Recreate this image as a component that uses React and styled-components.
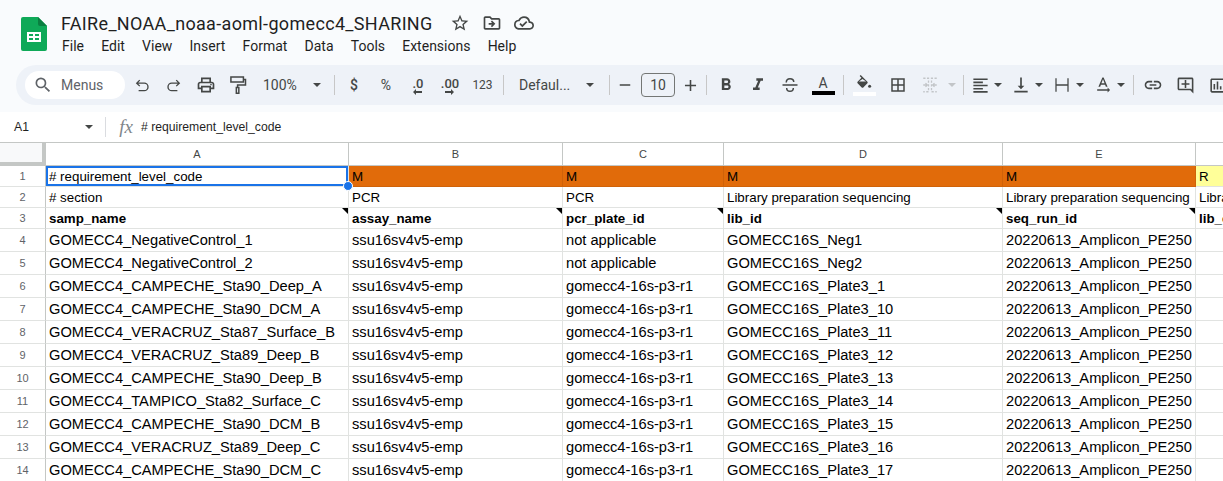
import React from 'react';
import styled, { createGlobalStyle } from 'styled-components';
import {
  MdStarBorder, MdOutlineDriveFileMove, MdOutlineCloudDone, MdSearch, MdOutlinePrint,
  MdRemove, MdAdd, MdFormatBold, MdFormatItalic, MdBorderAll, MdFormatAlignLeft,
  MdVerticalAlignBottom, MdTextRotationNone, MdLink, MdOutlineAddComment, MdOutlineInsertChart,
} from 'react-icons/md';

const GlobalStyle = createGlobalStyle`
  html, body { margin: 0; padding: 0; background: #f9fbfd; }
  body { font-family: Roboto, "Liberation Sans", sans-serif; }
`;

const Page = styled.div`
  width: 1223px;
  height: 481px;
  overflow: hidden;
  background: #f9fbfd;
  display: flex;
  flex-direction: column;
`;

const Header = styled.header`
  height: 65px;
  display: flex;
  padding-left: 21px;
  box-sizing: border-box;
  flex: none;
`;

const LogoWrap = styled.div`
  width: 26px;
  padding-top: 17px;
  margin-right: 14px;
`;

const HeaderMain = styled.div`
  display: flex;
  flex-direction: column;
`;

const TitleRow = styled.div`
  display: flex;
  align-items: center;
  height: 24px;
  margin-top: 11px;
  color: #444746;
`;

const Title = styled.div`
  font-size: 18px;
  letter-spacing: 0.33px;
  color: #1f1f1f;
  width: 383px;
  white-space: nowrap;
`;

const TitleIcon = styled.span`
  width: 32px;
  display: flex;
  justify-content: center;
`;

const MenuBar = styled.nav`
  display: flex;
  gap: 17.2px;
  padding-left: 1px;
  height: 22px;
  align-items: center;
  font-size: 14px;
  color: #1f1f1f;
`;

const Toolbar = styled.div`
  flex: none;
  height: 40px;
  margin-left: 16px;
  padding-left: 9px;
  display: flex;
  align-items: center;
  background: #eef2f8;
  border-radius: 20px 0 0 20px;
  color: #444746;
  overflow: hidden;
`;

const SearchPill = styled.div`
  flex: none;
  width: 100px;
  height: 28px;
  margin-right: 1px;
  box-sizing: border-box;
  padding-left: 8px;
  display: flex;
  align-items: center;
  gap: 8px;
  background: #fff;
  border-radius: 14px;
  font-size: 14px;
  color: #5f6368;
`;

const ToolButton = styled.div`
  flex: none;
  width: ${(p) => p.$w || 32}px;
  height: 28px;
  display: flex;
  align-items: center;
  justify-content: center;
  color: ${(p) => (p.$muted ? '#c2c5c8' : 'inherit')};
  font-size: ${(p) => p.$fs || 14}px;
  font-weight: ${(p) => (p.$bold ? 500 : 400)};
`;

const LabelButton = styled.div`
  flex: none;
  width: ${(p) => p.$w}px;
  padding-left: ${(p) => p.$pl}px;
  box-sizing: border-box;
  height: 28px;
  display: flex;
  align-items: center;
  justify-content: space-between;
  padding-right: ${(p) => p.$pr}px;
  font-size: 14px;
`;

const Caret = styled.span`
  width: 0;
  height: 0;
  border-left: 4px solid transparent;
  border-right: 4px solid transparent;
  border-top: 4px solid ${(p) => p.$color || '#444746'};
`;

const Sep = styled.span`
  flex: none;
  width: 1px;
  height: 20px;
  background: #c7c7c7;
  margin: 0 ${(p) => p.$r ?? 3}px 0 ${(p) => p.$l ?? 4}px;
`;

const SizeBox = styled.div`
  flex: none;
  width: 34px;
  height: 24px;
  margin: 0 3px;
  box-sizing: border-box;
  border: 1px solid #747775;
  border-radius: 4px;
  display: flex;
  align-items: center;
  justify-content: center;
  font-size: 14px;
`;

const Decimal = styled.span`
  display: flex;
  flex-direction: column;
  align-items: center;
  font-size: 13px;
  font-weight: 500;
  line-height: 11px;
  margin-top: 2px;
`;

const ColorIcon = styled.span`
  display: flex;
  flex-direction: column;
  align-items: center;
  width: 23px;
  font-size: 14px;
  line-height: 15px;
  margin-top: 1px;
`;

const Swatch = styled.span`
  width: 23px;
  height: 4px;
  background: ${(p) => p.$color};
`;

const FormulaBar = styled.div`
  flex: none;
  height: 30px;
  margin-top: 7px;
  background: #fff;
  display: flex;
  align-items: center;
  font-family: "Liberation Sans", Arial, sans-serif;
  font-size: 12.2px;
  color: #1f1f1f;
`;

const NameBox = styled.div`
  width: 106px;
  box-sizing: border-box;
  padding: 0 12px 0 14px;
  display: flex;
  justify-content: space-between;
  align-items: center;
  border-right: 1px solid #dadce0;
  height: 20px;
`;

const FxLabel = styled.span`
  width: 35px;
  text-align: right;
  padding-right: 8px;
  box-sizing: border-box;
  font-family: "Liberation Serif", serif;
  font-style: italic;
  font-size: 19px;
  color: #80868b;
`;

const Sheet = styled.div`
  position: relative;
  flex: none;
  display: grid;
  grid-template-columns: 46px 303px 214px 161px 279px 193px 193px;
  grid-template-rows: 23px 21px 21px 21px repeat(11, 23px);
  height: 339px;
  overflow: hidden;
  background: #fff;
  border-top: 1px solid #c4c7c5;
  font-family: "Liberation Sans", Arial, sans-serif;
`;

const Corner = styled.div`
  background: #f8f9fa;
  border-right: 4px solid #c4c7c5;
  border-bottom: 4px solid #c4c7c5;
`;

const ColHead = styled.div`
  display: flex;
  align-items: center;
  justify-content: center;
  background: #fff;
  border-right: 1px solid #c4c7c5;
  border-bottom: 1px solid #c4c7c5;
  font-size: 11px;
  color: #444746;
`;

const RowHead = styled.div`
  display: flex;
  align-items: center;
  justify-content: center;
  border-right: 1px solid #c4c7c5;
  border-bottom: 1px solid #e1e3e1;
  font-size: 11px;
  color: #5f6368;
`;

const Cell = styled.div`
  position: relative;
  display: flex;
  align-items: center;
  padding-left: 3px;
  box-sizing: border-box;
  white-space: nowrap;
  overflow: hidden;
  font-size: 13.33px;
  font-weight: ${(p) => (p.$bold ? 700 : 400)};
  color: #000;
  background: ${(p) => p.$bg || '#fff'};
  border-right: 1px solid ${(p) => p.$line || '#e1e3e1'};
  border-bottom: 1px solid ${(p) => p.$line || '#e1e3e1'};
  ${(p) => p.$selected && 'box-shadow: inset 0 0 0 2px #1a73e8;'}
`;

const DataCell = styled(Cell)`
  font-size: 14.67px;
`;

const NoteMark = styled.span`
  position: absolute;
  top: 0;
  right: 0;
  border-top: 6px solid #000;
  border-left: 6px solid transparent;
`;

const FillHandle = styled.span`
  position: absolute;
  left: 343px;
  top: 38px;
  width: 8px;
  height: 8px;
  border-radius: 50%;
  background: #1a73e8;
  border: 1px solid #fff;
`;

const ORANGE = '#e16b0a';
const ORANGE_LINE = '#cf6209';
const YELLOW = '#ffff99';
const LIB = 'Library preparation sequencing';
const COLS = ['A', 'B', 'C', 'D', 'E', 'F'];

const SAMPLES = [
  ['GOMECC4_NegativeControl_1', 'not applicable', 'GOMECC16S_Neg1'],
  ['GOMECC4_NegativeControl_2', 'not applicable', 'GOMECC16S_Neg2'],
  ['GOMECC4_CAMPECHE_Sta90_Deep_A', 'gomecc4-16s-p3-r1', 'GOMECC16S_Plate3_1'],
  ['GOMECC4_CAMPECHE_Sta90_DCM_A', 'gomecc4-16s-p3-r1', 'GOMECC16S_Plate3_10'],
  ['GOMECC4_VERACRUZ_Sta87_Surface_B', 'gomecc4-16s-p3-r1', 'GOMECC16S_Plate3_11'],
  ['GOMECC4_VERACRUZ_Sta89_Deep_B', 'gomecc4-16s-p3-r1', 'GOMECC16S_Plate3_12'],
  ['GOMECC4_CAMPECHE_Sta90_Deep_B', 'gomecc4-16s-p3-r1', 'GOMECC16S_Plate3_13'],
  ['GOMECC4_TAMPICO_Sta82_Surface_C', 'gomecc4-16s-p3-r1', 'GOMECC16S_Plate3_14'],
  ['GOMECC4_CAMPECHE_Sta90_DCM_B', 'gomecc4-16s-p3-r1', 'GOMECC16S_Plate3_15'],
  ['GOMECC4_VERACRUZ_Sta89_Deep_C', 'gomecc4-16s-p3-r1', 'GOMECC16S_Plate3_16'],
  ['GOMECC4_CAMPECHE_Sta90_DCM_C', 'gomecc4-16s-p3-r1', 'GOMECC16S_Plate3_17'],
];

const SheetsLogo = () => (
  <svg width="26" height="34" viewBox="0 0 26 34">
    <path d="M2 0h15l9 9v23a2 2 0 0 1-2 2H2a2 2 0 0 1-2-2V2a2 2 0 0 1 2-2z" fill="#0fa958" />
    <path d="M17 0l9 9h-7a2 2 0 0 1-2-2z" fill="#0a7f41" />
    <path d="M6 15h14v10H6z" fill="#fff" />
    <path d="M8 17h4v2H8zM14 17h4v2h-4zM8 21h4v2H8zM14 21h4v2h-4z" fill="#0fa958" />
  </svg>
);

const Stroke = ({ size = 20, weight = 1.8, children }) => (
  <svg width={size} height={size} viewBox="0 0 24 24" fill="none" stroke="currentColor" strokeWidth={weight}>
    {children}
  </svg>
);

const UndoIcon = () => (
  <Stroke size={18}>
    <path d="M9 5.500L5 9.500l4 4M5 9.500h10a5 5 0 0 1 0 10H7.500" />
  </Stroke>
);

const RedoIcon = () => (
  <Stroke size={18}>
    <path d="M15 5.500l4 4-4 4M19 9.500H9a5 5 0 0 0 0 10h7.500" />
  </Stroke>
);

const RollerIcon = () => (
  <Stroke>
    <path d="M3.500 2.500h15v6h-15zM18.500 5.500h2.500v6.500h-9.500v3" />
    <path d="M10 15h3v7h-3z" />
  </Stroke>
);

const StrikeIcon = () => (
  <Stroke>
    <path d="M3 12h18M7.500 9c0-3 2-4.500 4.500-4.500S16.500 6 16.500 8.500M8 15.500c0 2.500 1.800 4 4 4s4-1.500 4-4" />
  </Stroke>
);

const FillIcon = () => (
  <svg width="18" height="16.5" viewBox="0 0 24 22" fill="currentColor">
    <path d="M16.56 8.94L7.62 0 6.21 1.41l2.38 2.38-5.15 5.15c-.59.59-.59 1.54 0 2.12l5.5 5.5c.29.29.68.44 1.06.44s.77-.15 1.06-.44l5.500-5.500c.59-.58.59-1.530 0-2.120zM5.210 8.500L10 5.210l4.790 3.290H5.210z" fillRule="evenodd" />
    <circle cx="19.500" cy="15" r="2" />
  </svg>
);

const MergeIcon = () => (
  <Stroke size={18} weight={1.7}>
    <path strokeDasharray="3 2" d="M3 3h7v18H3M21 3h-7v18h7" />
    <path d="M3 12h5M6 9.500L8.500 12 6 14.500M21 12h-5M18 9.500L15.500 12l2.500 2.500" />
  </Stroke>
);

const WrapIcon = () => (
  <Stroke size={18} weight={1.7}>
    <path d="M4 3v18M20 3v18M4 12h16" />
  </Stroke>
);

const ArrowLeft = () => (
  <svg width="9" height="6" viewBox="0 0 9 6" fill="currentColor"><path d="M0 3l3-3v2h6v2H3v2z" /></svg>
);

const ArrowRight = () => (
  <svg width="9" height="6" viewBox="0 0 9 6" fill="currentColor"><path d="M9 3L6 0v2H0v2h6v2z" /></svg>
);

const IconCaret = ({ w, children }) => (
  <>
    <ToolButton $w={w}>{children}</ToolButton>
    <ToolButton $w={16}><Caret /></ToolButton>
  </>
);

export default function App() {
  return (
    <Page>
      <GlobalStyle />
      <Header>
        <LogoWrap><SheetsLogo /></LogoWrap>
        <HeaderMain>
          <TitleRow>
            <Title>FAIRe_NOAA_noaa-aoml-gomecc4_SHARING</Title>
            <TitleIcon><MdStarBorder size={20} /></TitleIcon>
            <TitleIcon><MdOutlineDriveFileMove size={20} /></TitleIcon>
            <TitleIcon><MdOutlineCloudDone size={20} /></TitleIcon>
          </TitleRow>
          <MenuBar>
            {['File', 'Edit', 'View', 'Insert', 'Format', 'Data', 'Tools', 'Extensions', 'Help'].map((m) => (
              <span key={m}>{m}</span>
            ))}
          </MenuBar>
        </HeaderMain>
      </Header>

      <Toolbar>
        <SearchPill><MdSearch size={20} />Menus</SearchPill>
        <ToolButton><UndoIcon /></ToolButton>
        <ToolButton><RedoIcon /></ToolButton>
        <ToolButton><MdOutlinePrint size={20} /></ToolButton>
        <ToolButton><RollerIcon /></ToolButton>
        <LabelButton $w={76} $pl={9} $pr={9}>100%<Caret /></LabelButton>
        <Sep />
        <ToolButton $bold>$</ToolButton>
        <ToolButton>%</ToolButton>
        <ToolButton><Decimal>.0<ArrowLeft /></Decimal></ToolButton>
        <ToolButton><Decimal>.00<ArrowRight /></Decimal></ToolButton>
        <ToolButton $w={33} $fs={12}>123</ToolButton>
        <Sep />
        <LabelButton $w={96} $pl={12} $pr={9}>Defaul...<Caret /></LabelButton>
        <Sep $l={6} $r={2} />
        <ToolButton $w={26}><MdRemove size={18} /></ToolButton>
        <SizeBox>10</SizeBox>
        <ToolButton $w={24}><MdAdd size={19} /></ToolButton>
        <Sep />
        <ToolButton><MdFormatBold size={20} /></ToolButton>
        <ToolButton><MdFormatItalic size={20} /></ToolButton>
        <ToolButton><StrikeIcon /></ToolButton>
        <ToolButton $w={34}><ColorIcon>A<Swatch $color="#000" /></ColorIcon></ToolButton>
        <Sep $l={3} $r={4} />
        <ToolButton><ColorIcon><FillIcon /><Swatch $color="#fff" /></ColorIcon></ToolButton>
        <ToolButton $w={36}><MdBorderAll size={18} /></ToolButton>
        <ToolButton $w={28} $muted><MergeIcon /></ToolButton>
        <ToolButton $w={16}><Caret $color="#c2c5c8" /></ToolButton>
        <Sep $l={3} $r={6} />
        <IconCaret w={20}><MdFormatAlignLeft size={19} /></IconCaret>
        <ToolButton $w={5} />
        <IconCaret w={20}><MdVerticalAlignBottom size={20} /></IconCaret>
        <ToolButton $w={5} />
        <IconCaret w={20}><WrapIcon /></IconCaret>
        <ToolButton $w={5} />
        <IconCaret w={20}><MdTextRotationNone size={20} /></IconCaret>
        <Sep $l={4} $r={3} />
        <ToolButton><MdLink size={20} /></ToolButton>
        <ToolButton><MdOutlineAddComment size={19} /></ToolButton>
        <ToolButton><MdOutlineInsertChart size={19} /></ToolButton>
      </Toolbar>

      <FormulaBar>
        <NameBox>A1<Caret /></NameBox>
        <FxLabel>fx</FxLabel>
        # requirement_level_code
      </FormulaBar>

      <Sheet>
        <Corner />
        {COLS.map((c) => <ColHead key={c}>{c}</ColHead>)}

        <RowHead>1</RowHead>
        <Cell $selected># requirement_level_code</Cell>
        {[0, 1, 2, 3].map((i) => <Cell key={i} $bg={ORANGE} $line={ORANGE_LINE}>M</Cell>)}
        <Cell $bg={YELLOW}>R</Cell>

        <RowHead>2</RowHead>
        <Cell># section</Cell>
        <Cell>PCR</Cell>
        <Cell>PCR</Cell>
        <Cell>{LIB}</Cell>
        <Cell>{LIB}</Cell>
        <Cell>{LIB}</Cell>

        <RowHead>3</RowHead>
        {['samp_name', 'assay_name', 'pcr_plate_id', 'lib_id', 'seq_run_id'].map((h) => (
          <Cell key={h} $bold>{h}<NoteMark /></Cell>
        ))}
        <Cell $bold>lib_conc</Cell>

        {SAMPLES.map(([name, plate, lib], i) => (
          <React.Fragment key={name}>
            <RowHead>{i + 4}</RowHead>
            <DataCell>{name}</DataCell>
            <DataCell>ssu16sv4v5-emp</DataCell>
            <DataCell>{plate}</DataCell>
            <DataCell>{lib}</DataCell>
            <DataCell>20220613_Amplicon_PE250</DataCell>
            <DataCell />
          </React.Fragment>
        ))}
        <FillHandle />
      </Sheet>
    </Page>
  );
}
